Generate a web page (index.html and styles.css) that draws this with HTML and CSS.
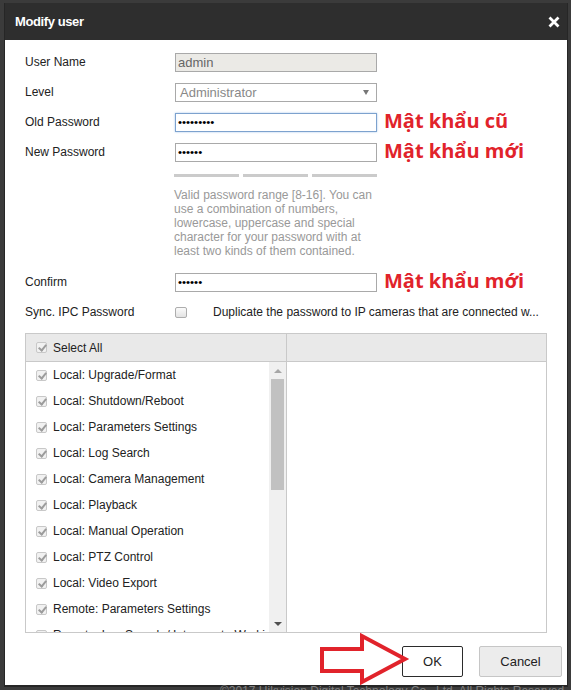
FILE: index.html
```html
<!DOCTYPE html>
<html lang="en">
<head>
<meta charset="utf-8">
<title>Modify user</title>
<link rel="stylesheet" href="styles.css">
</head>
<body>
<div class="dialog">
  <div class="dlg-header">
    <span class="dlg-title">Modify user</span>
    <span class="dlg-close"><svg width="12" height="12" viewBox="0 0 12 12"><path d="M1.5 1.5 L10.5 10.5 M10.5 1.5 L1.5 10.5" stroke="#fff" stroke-width="2.8" fill="none"/></svg></span>
  </div>
  <div class="dlg-body">
    <div class="form-row"><span class="lbl">User Name</span><div class="field field-ro">admin</div></div>
    <div class="form-row"><span class="lbl">Level</span><div class="field field-select"><span>Administrator</span><span class="sel-arrow"></span></div></div>
    <div class="form-row"><span class="lbl">Old Password</span><div class="field field-pw field-focus">•••••••••</div><span class="note">Mật khẩu cũ</span></div>
    <div class="form-row"><span class="lbl">New Password</span><div class="field field-pw">••••••</div><span class="note">Mật khẩu mới</span></div>
    <div class="strength"><span></span><span></span><span></span></div>
    <p class="hint">Valid password range [8-16]. You can use a combination of numbers, lowercase, uppercase and special character for your password with at least two kinds of them contained.</p>
    <div class="form-row confirm-row"><span class="lbl">Confirm</span><div class="field field-pw">••••••</div><span class="note">Mật khẩu mới</span></div>
    <div class="form-row"><span class="lbl">Sync. IPC Password</span><span class="chk"></span><span class="sync-text">Duplicate the password to IP cameras that are connected w...</span></div>
    <div class="perm-table">
      <div class="perm-left">
        <div class="perm-head"><span class="cb"></span>Select All</div>
        <div class="perm-body">
          <ul class="perm-list">
            <li><span class="cb"></span>Local: Upgrade/Format</li>
            <li><span class="cb"></span>Local: Shutdown/Reboot</li>
            <li><span class="cb"></span>Local: Parameters Settings</li>
            <li><span class="cb"></span>Local: Log Search</li>
            <li><span class="cb"></span>Local: Camera Management</li>
            <li><span class="cb"></span>Local: Playback</li>
            <li><span class="cb"></span>Local: Manual Operation</li>
            <li><span class="cb"></span>Local: PTZ Control</li>
            <li><span class="cb"></span>Local: Video Export</li>
            <li><span class="cb"></span>Remote: Parameters Settings</li>
            <li><span class="cb"></span>Remote: Log Search / Interrogate Working Status</li>
          </ul>
          <div class="vscroll">
            <span class="sb-btn"><span class="arr-up"></span></span>
            <span class="sb-track"><span class="sb-thumb"></span></span>
            <span class="sb-btn"><span class="arr-down"></span></span>
          </div>
        </div>
      </div>
      <div class="perm-right"><div class="perm-head"></div></div>
    </div>
    <div class="actions">
      <button class="btn btn-ok">OK</button>
      <button class="btn btn-cancel">Cancel</button>
    </div>
    <svg class="arrow-note" width="95" height="58" viewBox="0 0 95 58"><path d="M7 19 L47 19 L47 6 L90 29 L47 52 L47 41 L7 41 Z" fill="none" stroke="#e1232b" stroke-width="4" stroke-linejoin="miter"/></svg>
  </div>
</div>
<div class="copyright">©2017 Hikvision Digital Technology Co., Ltd. All Rights Reserved.</div>
</body>
</html>
```
FILE: styles.css
```css
* { box-sizing: border-box; }
html, body { overflow: hidden; }
body {
  margin: 0;
  height: 690px;
  background: #3b3b3b;
  font-family: "Liberation Sans", Arial, sans-serif;
  font-size: 12px;
  color: #222;
}
.dialog {
  margin: 3px 0 0 4px;
  width: 564px;
  background: #fff;
  border: 1px solid #262626;
  border-top: none;
  border-bottom-width: 2px;
}
.dlg-header {
  height: 37px;
  background: #2e2e2e;
  display: flex;
  align-items: center;
  justify-content: space-between;
  padding: 0 7px 0 10px;
  color: #fff;
}
.dlg-title {
  font-weight: bold;
  font-size: 13px;
  letter-spacing: -0.4px;
}
.dlg-close { display: flex; }
.dlg-body {
  position: relative;
  padding: 7px 5px 8px 20px;
}
.form-row {
  display: flex;
  align-items: center;
  height: 30px;
}
.lbl { width: 150px; flex: none; }
.field {
  width: 202px;
  height: 19px;
  flex: none;
  border: 1px solid #a9a9a9;
  background: #fff;
  font-size: 13px;
  display: flex;
  align-items: center;
  padding: 0 2px;
  color: #000;
}
.field-ro { background: #ebeae6; color: #666; }
.field-select {
  color: #888;
  padding: 0 7px 0 4px;
  justify-content: space-between;
}
.sel-arrow {
  width: 0;
  height: 0;
  border-left: 3px solid transparent;
  border-right: 3px solid transparent;
  border-top: 5px solid #777;
}
.field-pw { font-size: 11.5px; }
.field-focus {
  border-color: #7da2ce;
  box-shadow: 0 0 2px #a9c8ec;
}
.note {
  margin-left: 7px;
  color: #e1232b;
  font-family: "Open Sans", "Noto Sans", sans-serif;
  font-weight: bold;
  font-size: 20px;
  line-height: 30px;
  white-space: nowrap;
  position: relative;
  top: -1px;
}
.strength {
  display: flex;
  gap: 4px;
  margin: 7px 0 0 149px;
}
.strength span {
  width: 65px;
  height: 3px;
  background: #cbcbcb;
}
.hint {
  margin: 11px 0 0 149px;
  width: 206px;
  color: #999;
  line-height: 14px;
}
.confirm-row { margin-top: 9px; }
.chk {
  width: 12px;
  height: 11px;
  flex: none;
  border: 1px solid #adadad;
  border-radius: 2px;
  background: linear-gradient(#fbfbfb, #e3e3e3);
}
.sync-text {
  margin-left: 26px;
  white-space: nowrap;
}
.perm-table {
  display: flex;
  margin-top: 6px;
  width: 522px;
  height: 300px;
  border: 1px solid #c9c9c9;
}
.perm-left {
  width: 261px;
  border-right: 1px solid #c9c9c9;
  display: flex;
  flex-direction: column;
}
.perm-right { flex: 1; }
.perm-head {
  height: 28px;
  background: #e9e9e9;
  border-bottom: 1px solid #c9c9c9;
  display: flex;
  align-items: center;
  padding-left: 10px;
}
.perm-body {
  flex: 1;
  display: flex;
  overflow: hidden;
}
.perm-list {
  list-style: none;
  margin: 0;
  padding: 0;
  flex: 1;
  overflow: hidden;
}
.perm-list li {
  height: 26px;
  display: flex;
  align-items: center;
  padding-left: 10px;
  white-space: nowrap;
}
.cb {
  position: relative;
  width: 11px;
  height: 11px;
  flex: none;
  margin-right: 6px;
  border: 1px solid #c8c8c8;
  border-radius: 2px;
  background: #f1f1f1;
}
.cb::after {
  content: "";
  position: absolute;
  left: 3px;
  top: 0px;
  width: 3px;
  height: 6px;
  border: solid #9c9c9c;
  border-width: 0 2px 2px 0;
  transform: rotate(40deg);
}
.vscroll {
  width: 17px;
  flex: none;
  background: #f0f0f0;
  display: flex;
  flex-direction: column;
}
.sb-btn {
  height: 17px;
  display: flex;
  align-items: center;
  justify-content: center;
}
.sb-track {
  flex: 1;
  display: flex;
  justify-content: center;
}
.sb-thumb {
  width: 13px;
  height: 111px;
  background: #c1c1c1;
}
.arr-up {
  width: 0;
  height: 0;
  border-left: 4px solid transparent;
  border-right: 4px solid transparent;
  border-bottom: 4px solid #a6a6a6;
}
.arr-down {
  width: 0;
  height: 0;
  border-left: 4px solid transparent;
  border-right: 4px solid transparent;
  border-top: 4px solid #505050;
}
.actions {
  display: flex;
  justify-content: flex-end;
  gap: 16px;
  margin-top: 13px;
}
.btn {
  height: 31px;
  font-family: "Liberation Sans", Arial, sans-serif;
  font-size: 13px;
  color: #222;
  border-radius: 2px;
  padding: 0;
}
.btn-ok {
  width: 61px;
  background: #fff;
  border: 1px solid #2b2b2b;
}
.btn-cancel {
  width: 83px;
  background: #ececec;
  border: 1px solid #c6c6c6;
}
.arrow-note {
  position: absolute;
  left: 310px;
  top: 590px;
}
.copyright {
  margin: -3px 0 0 220px;
  color: #808080;
  font-size: 12px;
  line-height: 14px;
  white-space: nowrap;
}
```
